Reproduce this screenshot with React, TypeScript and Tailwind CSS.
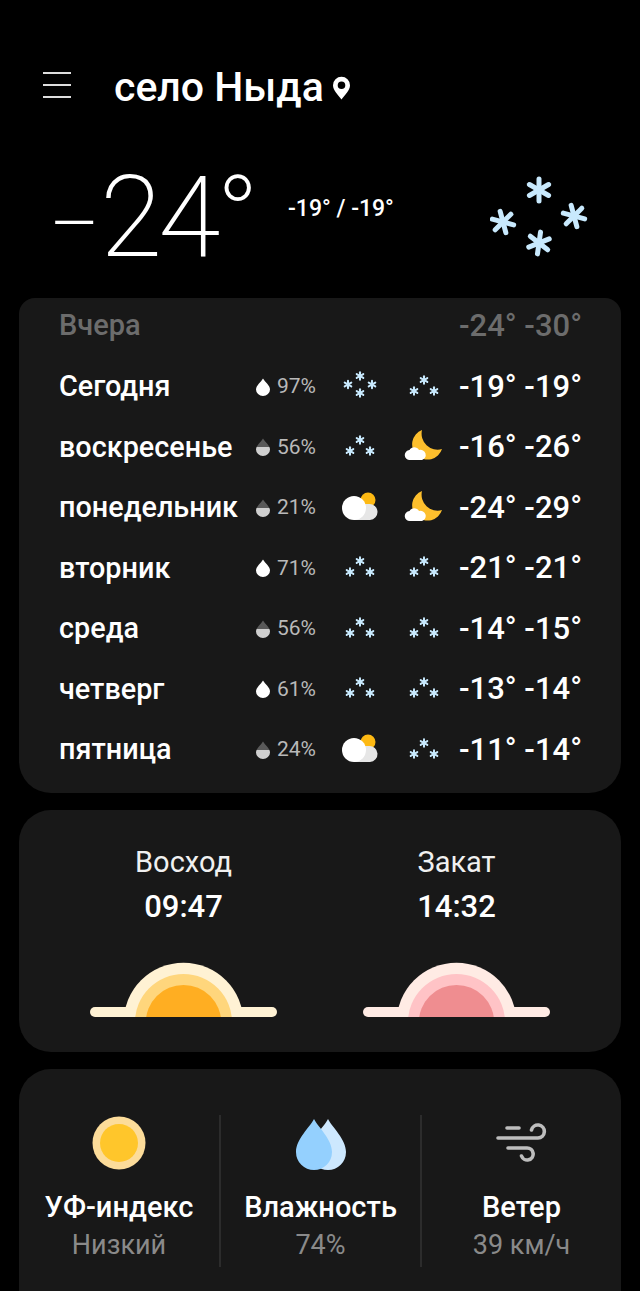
import React from 'react';

// Six-armed snowflake placed inside a parent svg
function Flake({ x, y, r, w, rotate = 0 }: { x: number; y: number; r: number; w: number; rotate?: number }) {
  return (
    <g transform={`translate(${x} ${y}) rotate(${rotate})`} stroke="#c8e9fd" strokeWidth={w} strokeLinecap="round">
      <line x1={0} y1={-r} x2={0} y2={r} />
      <line x1={-r * 0.87} y1={-r / 2} x2={r * 0.87} y2={r / 2} />
      <line x1={-r * 0.87} y1={r / 2} x2={r * 0.87} y2={-r / 2} />
    </g>
  );
}

function Snow4() {
  return (
    <svg width="40" height="40" viewBox="0 0 40 40">
      <Flake x={20} y={9} r={3.8} w={2} />
      <Flake x={8} y={17.5} r={3.8} w={2} />
      <Flake x={32} y={17.5} r={3.8} w={2} />
      <Flake x={20} y={26} r={3.8} w={2} />
    </svg>
  );
}

function Snow3() {
  return (
    <svg width="40" height="40" viewBox="0 0 40 40">
      <Flake x={20} y={13} r={3.8} w={2} />
      <Flake x={10} y={24} r={3.8} w={2} />
      <Flake x={30} y={24} r={3.8} w={2} />
    </svg>
  );
}

function Moon() {
  return (
    <svg width="40" height="40" viewBox="0 0 40 40">
      <path d="M18 3A15.3 15.3 0 1 0 38 22A16 16 0 0 1 18 3Z" fill="#fdbf2d" />
      <path d="M6 33a5 5 0 0 1-.5-10a5.5 5.5 0 0 1 9.5 0a5 5 0 0 1 3 10Z" fill="#ffffff" />
    </svg>
  );
}

function CloudSun() {
  return (
    <svg width="40" height="40" viewBox="0 0 40 40">
      <circle cx={28} cy={12} r={7.5} fill="#fdb913" />
      <path d="M14 32V16H29a8 8 0 0 1 1 16Z" fill="#e6e6e6" />
      <circle cx={14} cy={20} r={12} fill="#ffffff" />
    </svg>
  );
}

function SmallDrop({ half, id }: { half: boolean; id: string }) {
  return (
    <svg width="14" height="18" viewBox="0 0 14 18">
      <defs>
        <linearGradient id={id} x1="0" y1="0" x2="0" y2="1">
          <stop offset="0.5" stopColor="#595959" />
          <stop offset="0.5" stopColor="#cfcfcf" />
        </linearGradient>
      </defs>
      <path d="M7 0.5C9 4 14 7.5 14 11.5A7 6.5 0 0 1 0 11.5C0 7.5 5 4 7 0.5Z" fill={half ? `url(#${id})` : '#ffffff'} />
    </svg>
  );
}

type Day = { name: string; rain: string; half: boolean; day: React.ReactNode; night: React.ReactNode; temps: string };

const days: Day[] = [
  { name: 'Сегодня', rain: '97%', half: false, day: <Snow4 />, night: <Snow3 />, temps: '-19° -19°' },
  { name: 'воскресенье', rain: '56%', half: true, day: <Snow3 />, night: <Moon />, temps: '-16° -26°' },
  { name: 'понедельник', rain: '21%', half: true, day: <CloudSun />, night: <Moon />, temps: '-24° -29°' },
  { name: 'вторник', rain: '71%', half: false, day: <Snow3 />, night: <Snow3 />, temps: '-21° -21°' },
  { name: 'среда', rain: '56%', half: true, day: <Snow3 />, night: <Snow3 />, temps: '-14° -15°' },
  { name: 'четверг', rain: '61%', half: false, day: <Snow3 />, night: <Snow3 />, temps: '-13° -14°' },
  { name: 'пятница', rain: '24%', half: true, day: <CloudSun />, night: <Snow3 />, temps: '-11° -14°' },
];

function SunArc({ outer, mid, inner }: { outer: string; mid: string; inner: string }) {
  return (
    <svg width="187" height="55" viewBox="0 0 187 55">
      <rect x={0} y={45} width={187} height={10} rx={5} fill={outer} />
      <circle cx={93.5} cy={60.7} r={60} fill={outer} />
      <circle cx={93.5} cy={60.7} r={48.6} fill={mid} />
      <circle cx={93.5} cy={60.7} r={37.7} fill={inner} />
    </svg>
  );
}

const dropPath = 'M18 0C22 8 36 20 36 33A18 18 0 0 1 0 33C0 20 14 8 18 0Z';

export default function App() {
  return (
    <div className="h-[1291px] w-[640px] overflow-hidden bg-black font-['Roboto',sans-serif] text-white">
      {/* Location bar */}
      <div className="flex h-[170px] items-start pt-[66px]">
        <div className="ml-[43px] flex h-[40px] w-[28px] flex-col gap-[10px] pt-[6px]">
          <div className="h-[2px] bg-[#dddddd]" />
          <div className="h-[2px] bg-[#dddddd]" />
          <div className="h-[2px] bg-[#dddddd]" />
        </div>
        <div className="ml-[43px] text-[41px] leading-[42px] font-medium text-white">село Ныда</div>
        <svg className="mt-[10px] ml-[8px]" width="19" height="24" viewBox="0 0 19 24">
          <path
            fillRule="evenodd"
            d="M9.5 23.5C6 19 1 14.5 1 9.3A8.5 8.5 0 0 1 18 9.3C18 14.5 13 19 9.5 23.5ZM9.5 5.5a3.8 3.8 0 1 0 0 7.6a3.8 3.8 0 0 0 0-7.6Z"
            fill="#ffffff"
          />
        </svg>
      </div>

      {/* Current conditions */}
      <div className="flex h-[128px] items-start">
        <div className="ml-[48px] flex w-[206px] items-baseline text-[113px] leading-[96px] font-extralight tracking-[-4px]">
          <span className="w-[52px] text-[93px] tracking-normal">−</span>
          <span>24°</span>
        </div>
        <div className="mt-[27px] ml-[34px] text-[23px] leading-[24px] font-medium">-19° / -19°</div>
        <svg className="mt-[6px] mr-[50px] ml-auto" width="100" height="82" viewBox="0 0 100 82">
          <Flake x={49} y={14} r={11} w={5} />
          <Flake x={13} y={46} r={11} w={5} rotate={-15} />
          <Flake x={84} y={40} r={11} w={5} rotate={-15} />
          <Flake x={49} y={67} r={11} w={5} rotate={8} />
        </svg>
      </div>

      <div className="mx-[19px] flex flex-col gap-[17px]">
        {/* Weekly forecast */}
        <div className="overflow-hidden rounded-[32px] rounded-t-[16px] bg-[#181818] pb-[13px]">
          <div className="flex h-[58px] items-center justify-between pr-[39px] pb-[2px] pl-[40px] text-[29px] font-medium text-[#6c6c6c]">
            <span>Вчера</span>
            <span className="text-[31px]">-24° -30°</span>
          </div>
          {days.map((d, i) => (
            <div key={d.name} className="flex h-[60.5px] items-center pt-[1px] pr-[39px]">
              <span className="w-[237px] pl-[40px] text-[28.8px] font-medium whitespace-nowrap">{d.name}</span>
              <SmallDrop half={d.half} id={`drop-${i}`} />
              <span className="ml-[7px] w-[63px] text-[21px] text-[#b9b9b9]">{d.rain}</span>
              <div className="w-[40px]">{d.day}</div>
              <div className="ml-[24px] w-[40px]">{d.night}</div>
              <span className="ml-auto text-[31px] font-medium whitespace-nowrap">{d.temps}</span>
            </div>
          ))}
        </div>

        {/* Sunrise and sunset */}
        <div className="grid h-[242px] grid-cols-2 rounded-[32px] bg-[#181818]">
          <div className="flex flex-col items-center pt-[35px] pl-[28px]">
            <span className="text-[29px] leading-[34px] text-[#f0f0f0]">Восход</span>
            <span className="mt-[11px] text-[31px] leading-[34px] font-medium">09:47</span>
            <div className="mt-[38px]">
              <SunArc outer="#fff2d4" mid="#ffd67c" inner="#ffae22" />
            </div>
          </div>
          <div className="flex flex-col items-center pt-[35px] pr-[28px]">
            <span className="text-[29px] leading-[34px] text-[#f0f0f0]">Закат</span>
            <span className="mt-[11px] text-[31px] leading-[34px] font-medium">14:32</span>
            <div className="mt-[38px]">
              <SunArc outer="#ffebe4" mid="#ffc3c6" inner="#ef8d90" />
            </div>
          </div>
        </div>

        {/* UV, humidity, wind */}
        <div className="h-[260px] rounded-[32px] bg-[#181818] pt-[46px]">
          <div className="grid h-[152px] grid-cols-[200px_203px_199px]">
            <div className="flex flex-col items-center">
              <div className="flex h-[60px] items-center pb-[4px]">
                <svg width="54" height="54" viewBox="0 0 54 54">
                  <circle cx={27} cy={27} r={26.5} fill="#fcdc9a" />
                  <circle cx={27} cy={27} r={19} fill="#ffc62b" />
                </svg>
              </div>
              <span className="mt-[15px] text-[29px] leading-[34px] font-medium">УФ-индекс</span>
              <span className="mt-[5px] text-[27px] leading-[32px] text-[#8a8a8a]">Низкий</span>
            </div>
            <div className="flex flex-col items-center border-x-2 border-[#2c2c2c]">
              <div className="flex h-[60px] items-center">
                <svg width="50" height="52" viewBox="0 0 50 52">
                  <path d={dropPath} transform="translate(14 0)" fill="#cde8fe" />
                  <path d={dropPath} fill="#94d0fe" />
                </svg>
              </div>
              <span className="mt-[15px] text-[29px] leading-[34px] font-medium">Влажность</span>
              <span className="mt-[5px] text-[27px] leading-[32px] text-[#8a8a8a]">74%</span>
            </div>
            <div className="flex flex-col items-center">
              <div className="flex h-[60px] items-center pb-[4px]">
                <svg width="52" height="40" viewBox="0 0 52 40" fill="none" stroke="#bdbdbd" strokeWidth="3.6" strokeLinecap="round">
                  <path d="M11 5H23" />
                  <path d="M2 15H42A6.5 6.5 0 1 0 35.5 7" />
                  <path d="M12 25H31A6 6 0 1 1 25.5 33" />
                </svg>
              </div>
              <span className="mt-[15px] text-[29px] leading-[34px] font-medium">Ветер</span>
              <span className="mt-[5px] text-[27px] leading-[32px] text-[#8a8a8a]">39 км/ч</span>
            </div>
          </div>
        </div>
      </div>
    </div>
  );
}
